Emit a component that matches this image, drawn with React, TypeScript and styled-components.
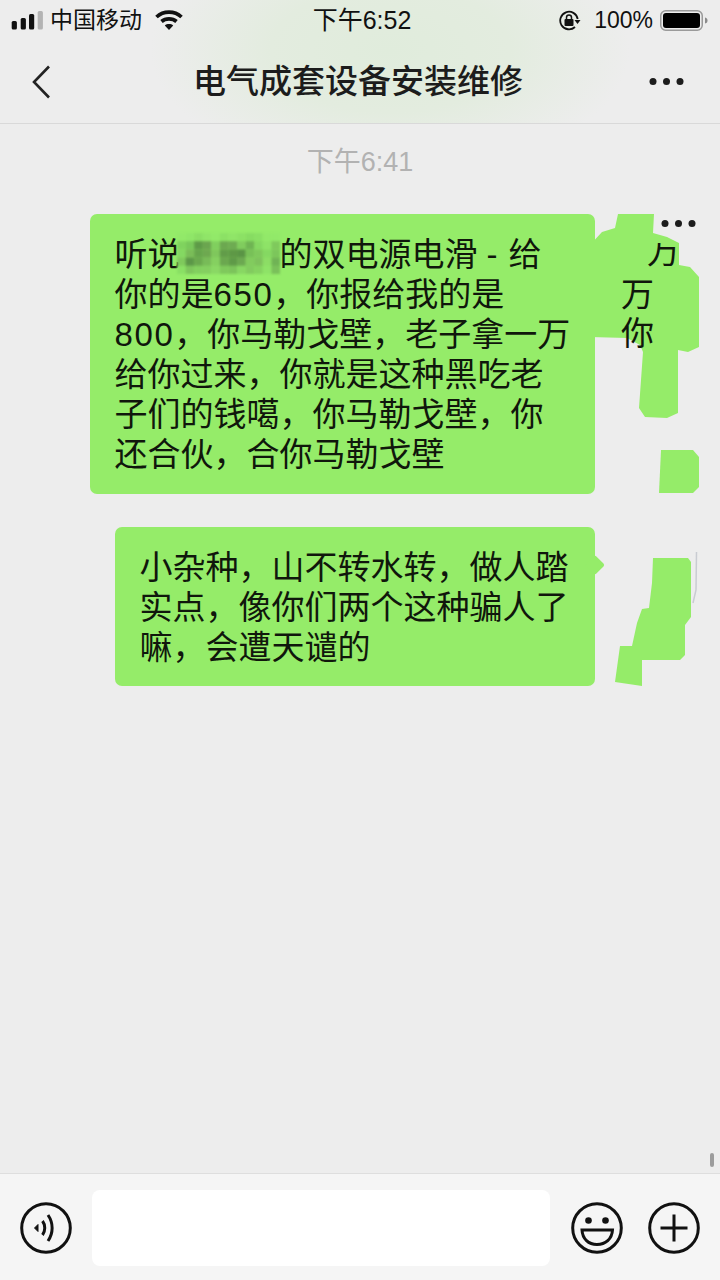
import styled, { createGlobalStyle } from "styled-components";

const GlobalStyle = createGlobalStyle`
	html, body {
		margin: 0;
		padding: 0;
		background: #ededed;
	}
	* {
		box-sizing: border-box;
	}
`;

const FONT = `"Liberation Sans", "Noto Sans CJK SC", sans-serif`;
const GREEN = "#95ec69";

const firstLines = ["给你过来，你就是这种黑吃老", "子们的钱噶，你马勒戈壁，你", "还合伙，合你马勒戈壁"];

const secondLines = ["小杂种，山不转水转，做人踏", "实点，像你们两个这种骗人了", "嘛，会遭天谴的"];

const mosaicTiles = [
	["#92e969", "#8fe668", "#8ade64", "#90e568", "#92e969", "#8ce165", "#90e568", "#8ce165", "#87dc62", "#8ae064", "#92e969", "#92e969"],
	["#7fd35e", "#78c85a", "#5e9a48", "#6ba54f", "#80cf5e", "#6ca850", "#6eab52", "#80cc5e", "#6fb453", "#85d862", "#8ee367", "#7fc95c"],
	["#84d862", "#7abc58", "#66a44c", "#6ea850", "#7fc75c", "#629c49", "#5e9846", "#5a9445", "#78c058", "#7fc85c", "#85d862", "#7cc65b"],
	["#7fc95c", "#5c9748", "#6aa84e", "#78bb58", "#85d060", "#6ba74f", "#5f9a48", "#6ca851", "#82cb5e", "#7ec25c", "#8cdd65", "#70b355"],
	["#8ae064", "#7ec65c", "#82cf5f", "#84cf60", "#8ad864", "#7fc95c", "#7cc45b", "#88d763", "#82cb5f", "#85d360", "#8ee367", "#7ac05a"],
];

const smears = [
	"M618 214 L654 214 L653 233 L667 237 L679 243 L679 265 L690 267 L699 277 L699 347 L688 352 L678 350 L678 413 L667 418 L645 417 L639 408 L643 352 L640 345 L627 338 L590 337 L590 245 L602 232 L615 228 Z",
	"M661 450 L693 450 L699 457 L699 487 L693 493 L659 493 Z",
	"M653 558 L688 558 L691 562 L691 617 L685 625 L685 655 L680 660 L642 660 L642 686 L615 682 L620 646 L632 646 L637 623 L642 609 L649 608 L652 583 Z",
];

const Mosaic = () => (
	<MosaicImage viewBox="0 0 102 42.5" width="103" height="41" preserveAspectRatio="none">
		{mosaicTiles.map((row, y) =>
			row.map((fill, x) => <rect key={`${x}-${y}`} x={x * 8.5} y={y * 8.5} width="8.6" height="8.6" fill={fill} />),
		)}
	</MosaicImage>
);

const SignalIcon = () => (
	<svg width="32" height="19" viewBox="0 0 32 19">
		<rect x="0.7" y="10" width="5.2" height="8.5" rx="1.5" fill="#111" />
		<rect x="9.7" y="7" width="5.2" height="11.5" rx="1.5" fill="#111" />
		<rect x="18" y="3" width="5.2" height="15.5" rx="1.5" fill="#111" />
		<rect x="26.7" y="0" width="5.2" height="18.5" rx="1.5" fill="#b4b4b4" />
	</svg>
);

const WifiIcon = () => (
	<svg width="28" height="20" viewBox="0 0 28 20" fill="none" stroke="#111" strokeWidth="3.7">
		<path d="M1.5 7 C8.5 0.5 19.5 0.5 26.5 7" />
		<path d="M6.5 11.5 C10.5 8 17.5 8 21.5 11.5" />
		<path d="M14 20 L9.8 15.4 C12 13.6 16 13.6 18.2 15.4 Z" fill="#111" stroke="none" />
	</svg>
);

const RotationIcon = () => (
	<svg width="23" height="21" viewBox="0 0 23 21" fill="none">
		<path d="M19.7 9 A8.8 8.8 0 1 0 17 17" stroke="#111" strokeWidth="1.8" />
		<path d="M16.5 10 H22.5 L19.5 14 Z" fill="#111" />
		<rect x="6.5" y="9" width="9" height="7" rx="1" fill="#111" />
		<path d="M8.5 9.5 V7.5 A2.5 2.5 0 0 1 13.5 7.5 V9.5" stroke="#111" strokeWidth="1.5" />
	</svg>
);

const BatteryIcon = () => (
	<svg width="48" height="21" viewBox="0 0 48 21">
		<rect x="0.75" y="0.75" width="41.5" height="19.5" rx="5" fill="none" stroke="#9a9a9a" strokeWidth="1.5" />
		<rect x="3" y="3" width="37" height="15" rx="3" fill="#000" />
		<path d="M45 7.5 C47 8 47.5 9 47.5 10.5 C47.5 12 47 13 45 13.5 Z" fill="#8a8a8a" />
	</svg>
);

const BackIcon = () => (
	<svg width="20" height="34" viewBox="0 0 20 34" fill="none" stroke="#222" strokeWidth="2.6">
		<path d="M18 1.5 L3 17 L18 32.5" />
	</svg>
);

const VoiceIcon = () => (
	<svg width="52" height="52" viewBox="0 0 52 52" fill="none" stroke="#111" strokeWidth="3">
		<circle cx="26" cy="26" r="24.3" />
		<path d="M14.5 26 L18 22.5 V29.5 Z" fill="#111" strokeWidth="1" />
		<path d="M22.5 19 C25.5 23 25.5 29 22.5 33" />
		<path d="M28 13 C33.5 21 33.5 31 28 39" />
	</svg>
);

const SmileIcon = () => (
	<svg width="52" height="52" viewBox="0 0 52 52" fill="none" stroke="#111" strokeWidth="3">
		<circle cx="26" cy="26" r="24.3" />
		<circle cx="17.5" cy="18.5" r="3.3" fill="#111" stroke="none" />
		<circle cx="34.5" cy="18.5" r="3.3" fill="#111" stroke="none" />
		<path d="M11 28 H41.5 C41 37 34.5 42.5 26 42.5 C17.5 42.5 11.5 37 11 28 Z" />
	</svg>
);

const PlusIcon = () => (
	<svg width="52" height="52" viewBox="0 0 52 52" fill="none" stroke="#111" strokeWidth="3">
		<circle cx="26" cy="26" r="24.3" />
		<path d="M26 12.5 V39.5 M12.5 26 H39.5" />
	</svg>
);

export default function App() {
	return (
		<Page>
			<GlobalStyle />
			<Header>
				<StatusBar>
					<StatusSide>
						<SignalIcon />
						<Carrier>中国移动</Carrier>
						<WifiIcon />
					</StatusSide>
					<Clock>下午6:52</Clock>
					<StatusRight>
						<RotationIcon />
						<Percent>100%</Percent>
						<BatteryIcon />
					</StatusRight>
				</StatusBar>
				<NavBar>
					<BackIcon />
					<Title>电气成套设备安装维修</Title>
					<NavDots $size={7} $gap={6.5} />
				</NavBar>
			</Header>

			<Chat>
				<TimeLabel>下午6:41</TimeLabel>
				<Bubble $width={505}>
					<Line>
						听说
						<Mosaic />
						的双电源电滑<Dash>-</Dash>给
					</Line>
					<Line>
						你的是<Digits>650</Digits>，你报给我的是
					</Line>
					<Line>
						<Digits>800</Digits>，你马勒戈壁，老子拿一万
					</Line>
					{firstLines.map((line) => (
						<Line key={line}>{line}</Line>
					))}
				</Bubble>
				<Bubble $width={480} $tail>
					{secondLines.map((line) => (
						<Line key={line}>{line}</Line>
					))}
				</Bubble>
				<ScrollThumb />
			</Chat>

			<InputBar>
				<VoiceIcon />
				<Input />
				<SmileIcon />
				<PlusIcon />
			</InputBar>

			<SmearLayer width="720" height="1280" viewBox="0 0 720 1280">
				{smears.map((d) => (
					<path key={d} d={d} fill={GREEN} />
				))}
				<path d="M696.5 552 L696 590 L693 603" fill="none" stroke="#c9ccd2" strokeWidth="1.5" />
			</SmearLayer>
			<SmearDots $size={7} $gap={6.5} />
			<ClippedGlyph $left={647} $top={232}>
				万
			</ClippedGlyph>
			<StrayGlyph $left={621} $top={275}>
				万
			</StrayGlyph>
			<StrayGlyph $left={621} $top={314}>
				你
			</StrayGlyph>
		</Page>
	);
}

const Page = styled.div`
	position: relative;
	display: flex;
	flex-direction: column;
	width: 720px;
	height: 1280px;
	overflow: hidden;
	background: #ededed;
	color: #111;
	font-family: ${FONT};
`;

const Header = styled.header`
	height: 124px;
	border-bottom: 1px solid #d9d9d9;
	background: radial-gradient(ellipse 240px 125px at 390px 50px, #e0ecdc 0%, #e3ecdf 50%, #ededed 100%);
`;

const StatusBar = styled.div`
	display: grid;
	grid-template-columns: 1fr auto 1fr;
	align-items: center;
	height: 40px;
	padding: 0 12px 0 11px;
`;

const StatusSide = styled.div`
	display: flex;
	align-items: center;
	gap: 7px;
`;

const StatusRight = styled(StatusSide)`
	justify-content: flex-end;
	gap: 7px;
`;

const Carrier = styled.span`
	margin-right: 6px;
	font-size: 23px;
	line-height: 40px;
`;

const Clock = styled.span`
	margin-left: 5px;
	font-size: 25px;
	font-weight: 400;
	line-height: 40px;
`;

const Percent = styled.span`
	margin-left: 6px;
	font-size: 23px;
	line-height: 40px;
`;

const NavBar = styled.nav`
	display: grid;
	grid-template-columns: 1fr auto 1fr;
	align-items: center;
	height: 83px;
	padding: 0 37px 0 31px;
`;

const Title = styled.h1`
	margin: 0 0 0 2px;
	color: #1c1c1c;
	font-size: 33px;
	font-weight: 500;
	line-height: 44px;
`;

const Dots = styled.span<{ $size: number; $gap: number }>`
	display: block;
	width: ${(p) => p.$size}px;
	height: ${(p) => p.$size}px;
	margin: 0 ${(p) => p.$size + p.$gap}px;
	border-radius: 50%;
	background: #1c1c1c;
	box-shadow:
		${(p) => p.$size + p.$gap}px 0 0 #1c1c1c,
		-${(p) => p.$size + p.$gap}px 0 0 #1c1c1c;
`;

const NavDots = styled(Dots)`
	justify-self: end;
`;

const SmearDots = styled(Dots)`
	position: absolute;
	top: 219.5px;
	left: 675px;
	margin: 0;
`;

const Chat = styled.main`
	position: relative;
	display: flex;
	flex: 1;
	flex-direction: column;
	align-items: flex-end;
	padding-right: 125px;
`;

const TimeLabel = styled.div`
	align-self: center;
	margin: 19px -125px 0 0;
	color: #b2b2b2;
	font-size: 27px;
	line-height: 38px;
`;

const Bubble = styled.div<{ $width: number; $tail?: boolean }>`
	position: relative;
	width: ${(p) => p.$width}px;
	margin-top: 33px;
	padding: 21px 24px ${(p) => (p.$tail ? 18 : 19)}px 24.5px;
	border-radius: 7px;
	background: ${GREEN};

	&::after {
		content: ${(p) => (p.$tail ? '""' : "none")};
		position: absolute;
		top: 31px;
		right: -7px;
		width: 14px;
		height: 14px;
		border-radius: 2px;
		background: ${GREEN};
		transform: rotate(45deg);
	}
`;

const Line = styled.div`
	display: flex;
	align-items: center;
	height: 40px;
	color: #10170c;
	font-size: 33px;
	line-height: 40px;
	white-space: pre;
`;

const Digits = styled.span`
	letter-spacing: 1.6px;
`;

const Dash = styled.span`
	margin: 0 11px 0 9px;
`;

const MosaicImage = styled.svg`
	display: block;
	flex: none;
	margin: 0 0 4px -4px;
	filter: blur(0.8px);
`;

const ScrollThumb = styled.div`
	position: absolute;
	right: 6px;
	bottom: 6px;
	width: 4px;
	height: 14px;
	border-radius: 2px;
	background: #9c9c9c;
`;

const InputBar = styled.footer`
	display: flex;
	align-items: center;
	height: 107px;
	padding: 2px 20px 0;
	border-top: 1px solid #dedede;
	background: #f5f5f5;
`;

const Input = styled.div`
	width: 458px;
	height: 76px;
	margin: 0 21px 0 20px;
	border-radius: 8px;
	background: #fff;

	& + svg + svg {
		margin-left: 25px;
	}
`;

const SmearLayer = styled.svg`
	position: absolute;
	top: 0;
	left: 0;
	pointer-events: none;
`;

const StrayGlyph = styled.span<{ $left: number; $top: number }>`
	position: absolute;
	top: ${(p) => p.$top}px;
	left: ${(p) => p.$left}px;
	color: #10170c;
	font-size: 33px;
	line-height: 40px;
`;

const ClippedGlyph = styled(StrayGlyph)`
	clip-path: inset(11px 0 0 0);
`;
